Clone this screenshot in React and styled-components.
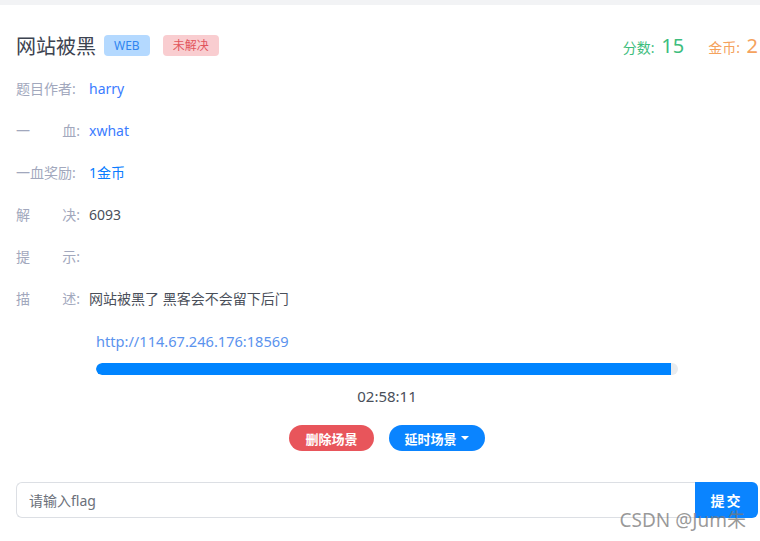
import React from 'react'
import styled, { createGlobalStyle } from 'styled-components'

const GlobalStyle = createGlobalStyle`
  html, body { margin: 0; padding: 0; background: #fff; }
  body {
    font-family: "Noto Sans", "Noto Sans CJK SC", sans-serif;
    overflow: hidden;
  }
`

const rows = [
  { label: ['题目作者:'], value: 'harry', tone: 'link' },
  { label: ['一', '血:'], value: 'xwhat', tone: 'link' },
  { label: ['一血奖励:'], value: '1金币', tone: 'coin' },
  { label: ['解', '决:'], value: '6093', tone: 'plain' },
  { label: ['提', '示:'], value: '', tone: 'plain' },
  { label: ['描', '述:'], value: '网站被黑了 黑客会不会留下后门', tone: 'plain' },
]

export default function App() {
  return (
    <Page>
      <GlobalStyle />
      <TopStrip />
      <Card>
        <Header>
          <TitleGroup>
            <Title>网站被黑</Title>
            <Badge kind="web">WEB</Badge>
            <Badge kind="todo">未解决</Badge>
          </TitleGroup>
          <Stats>
            <Stat color="#3dbd7d">分数: <big>15</big></Stat>
            <Stat color="#f5a25d">金币: <big>2</big></Stat>
          </Stats>
        </Header>

        <InfoList>
          {rows.map((r, i) => (
            <InfoRow key={i}>
              <Label spread={r.label.length > 1}>
                {r.label.map((t, j) => <span key={j}>{t}</span>)}
              </Label>
              <Value tone={r.tone}>{r.value}</Value>
            </InfoRow>
          ))}
        </InfoList>

        <Scene>
          <Url>http://114.67.246.176:18569</Url>
          <Track>
            <Fill style={{ width: '98.8%' }} />
          </Track>
          <Timer>02:58:11</Timer>
          <Actions>
            <PillButton color="#e8555b">删除场景</PillButton>
            <PillButton color="#0a84ff">延时场景<Caret /></PillButton>
          </Actions>
        </Scene>

        <FlagForm>
          <FlagInput placeholder="请输入flag" />
          <SubmitButton>提交</SubmitButton>
        </FlagForm>
      </Card>
      <Watermark>CSDN @Jum朱</Watermark>
    </Page>
  )
}

const Page = styled.div`
  width: 760px;
  height: 541px;
  position: relative;
  overflow: hidden;
`

const TopStrip = styled.div`
  height: 5px;
  background: #f2f3f5;
`

const Card = styled.div`
  padding: 25px 2px 0 16px;
`

const Header = styled.div`
  display: flex;
  align-items: center;
  justify-content: space-between;
  height: 30px;
`

const TitleGroup = styled.div`
  display: flex;
  align-items: center;
`

const Title = styled.h2`
  margin: 0 8px 0 0;
  font-size: 20px;
  font-weight: 400;
  color: #3d4350;
  font-family: "Noto Sans CJK SC", sans-serif;
`

const Badge = styled.span`
  display: inline-flex;
  align-items: center;
  justify-content: center;
  height: 21px;
  padding: 0 10px;
  margin-right: 13px;
  border-radius: 4px;
  font-size: 12px;
  background: ${p => (p.kind === 'web' ? '#b4d9ff' : '#f9cdd0')};
  color: ${p => (p.kind === 'web' ? '#2f86f0' : '#e2555c')};
`

const Stats = styled.div`
  display: flex;
  align-items: baseline;
  gap: 24px;
  margin-right: 0;
`

const Stat = styled.span`
  color: ${p => p.color};
  font-size: 14px;
  big {
    font-size: 20px;
    margin-left: 3px;
  }
`

const InfoList = styled.div`
  margin-top: 17px;
  display: flex;
  flex-direction: column;
  gap: 20px;
`

const InfoRow = styled.div`
  display: flex;
  align-items: center;
  height: 22px;
  font-size: 14px;
`

const Label = styled.div`
  width: 64px;
  display: flex;
  justify-content: ${p => (p.spread ? 'space-between' : 'flex-start')};
  color: #a2a8bd;
  margin-right: 9px;
  white-space: nowrap;
`

const Value = styled.div`
  color: ${p =>
    p.tone === 'link' ? '#3b7cff' : p.tone === 'coin' ? '#0a7cff' : '#4a4f5a'};
`

const Scene = styled.div`
  margin: 22px 80px 0 80px;
  display: flex;
  flex-direction: column;
`

const Url = styled.div`
  font-size: 14.6px;
  color: #5b93ee;
  height: 20px;
`

const Track = styled.div`
  margin-top: 12px;
  height: 12px;
  border-radius: 6px;
  background: #e9ecef;
  overflow: hidden;
`

const Fill = styled.div`
  height: 100%;
  background: #0084ff;
  border-radius: 6px 0 0 6px;
`

const Timer = styled.div`
  margin-top: 11px;
  text-align: center;
  font-size: 15px;
  color: #4a4f5a;
`

const Actions = styled.div`
  margin-top: 19px;
  display: flex;
  justify-content: center;
  gap: 15px;
`

const PillButton = styled.button`
  display: inline-flex;
  align-items: center;
  height: 26px;
  padding: 0 16px;
  border: none;
  border-radius: 13px;
  background: ${p => p.color};
  color: #fff;
  font-size: 13px;
  font-weight: 700;
  font-family: "Noto Sans CJK SC", sans-serif;
`

const Caret = styled.span`
  display: inline-block;
  margin-left: 4px;
  border-left: 4px solid transparent;
  border-right: 4px solid transparent;
  border-top: 4px solid #fff;
`

const FlagForm = styled.div`
  margin-top: 31px;
  display: flex;
  height: 36px;
`

const FlagInput = styled.input`
  flex: 1;
  border: 1px solid #dcdfe4;
  border-right: none;
  border-radius: 6px 0 0 6px;
  padding: 0 12px;
  font-size: 14px;
  font-family: "Noto Sans", "Noto Sans CJK SC", sans-serif;
  outline: none;
  &::placeholder { color: #6b707a; }
`

const SubmitButton = styled.button`
  width: 63px;
  border: none;
  background: #0a84ff;
  color: #fff;
  font-size: 14px;
  font-weight: 700;
  letter-spacing: 2px;
  border-radius: 0 6px 6px 0;
  font-family: "Noto Sans CJK SC", sans-serif;
`

const Watermark = styled.div`
  position: absolute;
  right: 14px;
  bottom: 8px;
  font-size: 19px;
  color: rgba(120, 120, 120, 0.75);
  font-family: "Noto Sans", "Noto Sans CJK SC", sans-serif;
`
